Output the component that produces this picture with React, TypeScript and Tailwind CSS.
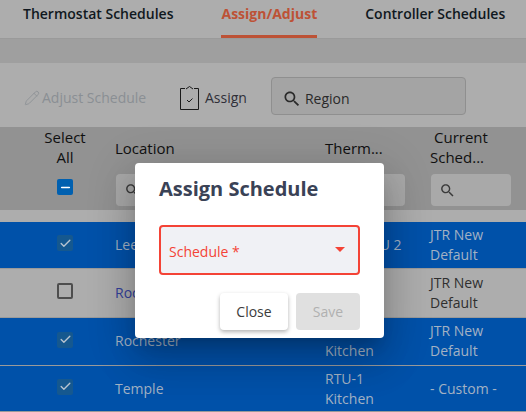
import { Pencil, Check, Minus } from 'lucide-react'

const rows = [
  { location: 'Leesburg', thermostat: ['Store RTU 2'], schedule: ['JTR New', 'Default'], selected: true, height: 'h-[47px]', textPad: '' },
  { location: 'Rochester', thermostat: [], schedule: ['JTR New', 'Default'], selected: false, height: 'h-[49px]', textPad: '' },
  { location: 'Rochester', thermostat: ['RTU-1', 'Kitchen'], schedule: ['JTR New', 'Default'], selected: true, height: 'h-[48px]', textPad: 'pb-[2px]' },
  { location: 'Temple', thermostat: ['RTU-1', 'Kitchen'], schedule: ['- Custom -'], selected: true, height: 'h-[46px]', textPad: '' },
]

function SearchIcon({ size }: { size: number }) {
  return (
    <svg width={size} height={size} viewBox="0 0 24 24" fill="currentColor">
      <path d="M15.5 14h-.79l-.28-.27C15.41 12.59 16 11.11 16 9.5 16 5.91 13.09 3 9.5 3S3 5.91 3 9.5 5.91 16 9.5 16c1.61 0 3.09-.59 4.23-1.57l.27.28v.79l5 4.99L20.49 19l-4.99-5zm-6 0C7.01 14 5 11.99 5 9.5S7.01 5 9.5 5 14 7.01 14 9.5 11.99 14 9.5 14z" />
    </svg>
  )
}

function ClipboardCheck() {
  return (
    <svg width="20" height="26" viewBox="0 0 20 26" fill="none" stroke="#1a1a1a" strokeWidth="1">
      <path d="M5 3.5H0.5V24.5H18.5V3.5H14" />
      <path d="M6 4L9.5 1.5L13 4" />
      <path d="M7 15L9 17L12.5 13.5" />
    </svg>
  )
}

function FilterBox({ className }: { className: string }) {
  return (
    <div className={`h-8 rounded bg-[#a9a9a9] flex items-center pl-2 text-[#3a3a3a] ${className}`}>
      <SearchIcon size={17} />
    </div>
  )
}

export default function App() {
  return (
    <div className="relative w-[526px] h-[412px] overflow-hidden bg-white font-['Open_Sans',sans-serif] text-sm">
      <div className="h-[39px] flex border-b border-[#9a9a9a] bg-[#adadad] text-[#101820] font-semibold">
        <div className="ml-[23px] pt-[3px] leading-[22px]">Thermostat Schedules</div>
        <div className="ml-[48px] pt-[3px] h-[38px] leading-[22px] border-b-[3px] border-[#bd5236] text-[#bd5236] font-bold">Assign/Adjust</div>
        <div className="ml-[48px] pt-[3px] leading-[22px]">Controller Schedules</div>
      </div>
      <div className="h-[24px] bg-[#9f9f9f]" />
      <div className="h-[64px] bg-[#adadad] flex items-start pt-[14px]">
        <div className="ml-[24px] mt-[11px] w-[130px] flex items-center gap-[2px] leading-[20px] text-[#8a8f94]">
          <Pencil size={16} strokeWidth={1.25} />
          <span>Adjust Schedule</span>
        </div>
        <div className="ml-[26px] mt-[8px] flex items-center gap-[5px] text-[#2f2f38]">
          <ClipboardCheck />
          <span>Assign</span>
        </div>
        <div className="ml-[24px] w-[195px] h-[38px] rounded border border-[#8f8f8f] bg-[#a4a4a4] flex items-center pt-[6px] pl-[10px] gap-[3px] text-[#2a2a2a]">
          <SearchIcon size={20} />
          <span>Region</span>
        </div>
      </div>
      <div className="h-[83px] bg-[#929292] grid grid-cols-[107px_210px_106px_103px] text-[15px] leading-[20px] text-[#101010]">
        <div className="pl-[23px] flex flex-col items-center text-center">
          <span>Select</span>
          <span>All</span>
          <span className="mt-[12px] w-4 h-4 rounded-[2px] bg-[#0060b0] flex items-center justify-center text-white">
            <Minus size={13} strokeWidth={3} />
          </span>
        </div>
        <div className="pl-[9px] pt-[11px]">
          <div className="-ml-px">Location</div>
          <FilterBox className="mt-[16px] w-[190px]" />
        </div>
        <div className="pl-2 pt-[11px]">
          <div>Therm...</div>
          <FilterBox className="mt-[16px] w-[80px]" />
        </div>
        <div className="pl-2">
          <div className="ml-[3px]">Current</div>
          <div className="-ml-px">Sched...</div>
          <FilterBox className="mt-[7px] w-[80px]" />
        </div>
      </div>
      <div className="h-[12px] bg-[#adadad]" />
      {rows.map((row) => (
        <div
          key={row.location + row.height}
          className={`${row.height} grid grid-cols-[107px_210px_106px_103px] items-center leading-[20px] border-b border-[#9a9a9a] ${
            row.selected ? 'bg-[#0051a9] text-[#a3b2c4]' : 'bg-[#adadad] text-[#2f2f2f]'
          }`}
        >
          <div className="pl-[23px] pb-[4px] flex justify-center">
            {row.selected ? (
              <span className="w-4 h-4 rounded-[2px] bg-[#15588f] flex items-center justify-center text-[#b8c4d0]">
                <Check size={13} strokeWidth={2.5} />
              </span>
            ) : (
              <span className="w-4 h-4 rounded-[2px] border-2 border-[#4e4e4e]" />
            )}
          </div>
          <div className={`pl-2 ${row.textPad} ${row.selected ? '' : 'text-[#33409a]'}`}>{row.location}</div>
          <div className={`pl-2 ${row.textPad}`}>
            {row.thermostat.map((line) => (
              <div key={line}>{line}</div>
            ))}
          </div>
          <div className={`pl-[7px] ${row.textPad}`}>
            {row.schedule.map((line) => (
              <div key={line}>{line}</div>
            ))}
          </div>
        </div>
      ))}

      <div className="absolute left-[135px] top-[163px] w-[249px] h-[175px] rounded bg-white px-6 shadow-[0_11px_15px_-7px_rgba(0,0,0,0.2),0_24px_38px_3px_rgba(0,0,0,0.14),0_9px_46px_8px_rgba(0,0,0,0.12)]">
        <h2 className="pt-[11px] text-[20px] leading-[30px] font-bold text-[#3a4256]">Assign Schedule</h2>
        <div className="mt-[21px] h-[50px] rounded border-2 border-[#f44336] bg-[#f0f1f5] flex items-center justify-between pl-2 pr-[13px] text-[#f44336]">
          <span className="pt-[4px]">Schedule *</span>
          <span className="-mt-[2px] w-0 h-0 border-x-[5px] border-x-transparent border-t-[5px] border-t-[#f44336]" />
        </div>
        <div className="mt-[18px] flex justify-end gap-2">
          <button className="w-[68px] h-[37px] rounded bg-white text-[#3c3c3c] shadow-[0_2px_4px_rgba(0,0,0,0.3)]">Close</button>
          <button className="w-16 h-[37px] rounded bg-[#e0e0e0] text-[#b0b0b0]">Save</button>
        </div>
      </div>
    </div>
  )
}
